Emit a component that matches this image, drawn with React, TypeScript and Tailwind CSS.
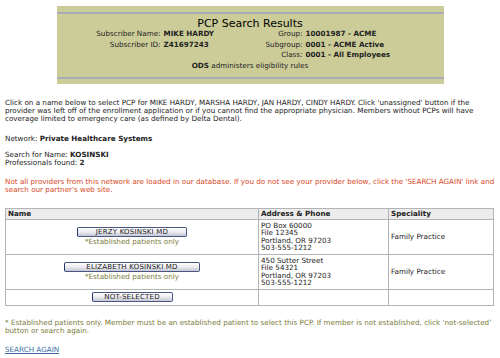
import React from "react";

interface Provider {
  name: string;
  width: string;
  address: string[];
  speciality: string;
}

const providers: Provider[] = [
  {
    name: "JERZY KOSINSKI MD",
    width: "w-[110px]",
    address: ["PO Box 60000", "File 12345", "Portland, OR 97203", "503-555-1212"],
    speciality: "Family Practice",
  },
  {
    name: "ELIZABETH KOSINSKI MD",
    width: "w-[136px]",
    address: ["450 Sutter Street", "File 54321", "Portland, OR 97203", "503-555-1212"],
    speciality: "Family Practice",
  },
];

const PcpButton = ({ label, width }: { label: string; width: string }) => (
  <button
    className={`${width} h-[10px] rounded-[2px] border border-[#4a5584] border-l-[#243268] bg-gradient-to-b from-white via-[#ececf0] to-[#c4c6d2] text-[7px] leading-[8px] text-[#222] tracking-[0.2px]`}
  >
    {label}
  </button>
);

const InfoRow = ({
  l1,
  v1,
  l2,
  v2,
}: {
  l1?: string;
  v1?: string;
  l2: string;
  v2: string;
}) => (
  <>
    <div className="text-right">{l1}</div>
    <div className="pl-[3px] font-bold">{v1}</div>
    <div className="text-right">{l2}</div>
    <div className="pl-[3px] font-bold">{v2}</div>
  </>
);

export default function App() {
  return (
    <div className="w-[500px] h-[358px] overflow-hidden bg-white text-[7.2px] leading-[8px] text-[#222] font-['DejaVu_Sans',Verdana,sans-serif]">
      {/* header box */}
      <div className="mx-auto mt-[6px] w-[387px] bg-[#cccc99] pt-[6px] pb-[5px]">
        <div className="h-[2px] bg-[#a9abb5]" />
        <div className="mt-[4px] text-center text-[11px] leading-[11px] text-black">PCP Search Results</div>
        <div className="grid grid-cols-[104px_86px_56px_1fr] leading-[10.7px] text-[#222]">
          <InfoRow l1="Subscriber Name:" v1="MIKE HARDY" l2="Group:" v2="10001987 - ACME" />
          <InfoRow l1="Subscriber ID:" v1="Z41697243" l2="Subgroup:" v2="0001 - ACME Active" />
          <InfoRow l2="Class:" v2="0001 - All Employees" />
        </div>
        <div className="text-center leading-[10.7px]">
          <span className="font-bold">ODS</span> administers eligibility rules
        </div>
        <div className="mt-[5px] h-[2px] bg-[#a9abb5]" />
      </div>

      <div className="px-[5px]">
        <p className="mt-[15px]">
          Click on a name below to select PCP for MIKE HARDY, MARSHA HARDY, JAN HARDY, CINDY HARDY. Click 'unassigned' button if the
          provider was left off of the enrollment application or if you cannot find the appropriate physician. Members without PCPs will have
          coverage limited to emergency care (as defined by Delta Dental).
        </p>

        <p className="mt-[12px]">
          Network: <span className="font-bold">Private Healthcare Systems</span>
        </p>

        <p className="mt-[8px]">
          Search for Name: <span className="font-bold">KOSINSKI</span>
          <br />
          Professionals found: <span className="font-bold">2</span>
        </p>

        <p className="mt-[11px] text-[#d8461c]">
          Not all providers from this network are loaded in our database. If you do not see your provider below, click the 'SEARCH AGAIN' link and
          search our partner's web site.
        </p>

        <table className="mt-[14px] w-[489px] border-collapse border border-[#b4b4b4]">
          <thead>
            <tr className="bg-[#ececec] h-[11px]">
              <th className="w-[253px] border border-[#b4b4b4] px-[2px] text-left font-bold leading-[10px]">Name</th>
              <th className="w-[130px] border border-[#b4b4b4] px-[2px] text-left font-bold leading-[10px]">Address &amp; Phone</th>
              <th className="border border-[#b4b4b4] px-[2px] text-left font-bold leading-[10px]">Speciality</th>
            </tr>
          </thead>
          <tbody>
            {providers.map((p) => (
              <tr key={p.name} className="h-[35px]">
                <td className="border border-[#b4b4b4] text-center align-middle">
                  <PcpButton label={p.name} width={p.width} />
                  <div className="mt-[1px] text-[#7a7a3a] leading-[8px]">*Established patients only</div>
                </td>
                <td className="border border-[#b4b4b4] px-[2px] align-middle leading-[7.6px]">
                  {p.address.map((a) => (
                    <div key={a}>{a}</div>
                  ))}
                </td>
                <td className="border border-[#b4b4b4] px-[2px] align-middle">{p.speciality}</td>
              </tr>
            ))}
            <tr className="h-[16px]">
              <td className="border border-[#b4b4b4] text-center align-middle">
                <PcpButton label="NOT-SELECTED" width="w-[81px]" />
              </td>
              <td className="border border-[#b4b4b4]" />
              <td className="border border-[#b4b4b4]" />
            </tr>
          </tbody>
        </table>

        <p className="mt-[13px] text-[#7a7a3a]">
          * Established patients only. Member must be an established patient to select this PCP. If member is not established, click 'not-selected'
          button or search again.
        </p>

        <a href="#" className="mt-[11px] block w-max text-[#3a6ea5] underline">
          SEARCH AGAIN
        </a>
      </div>
    </div>
  );
}
